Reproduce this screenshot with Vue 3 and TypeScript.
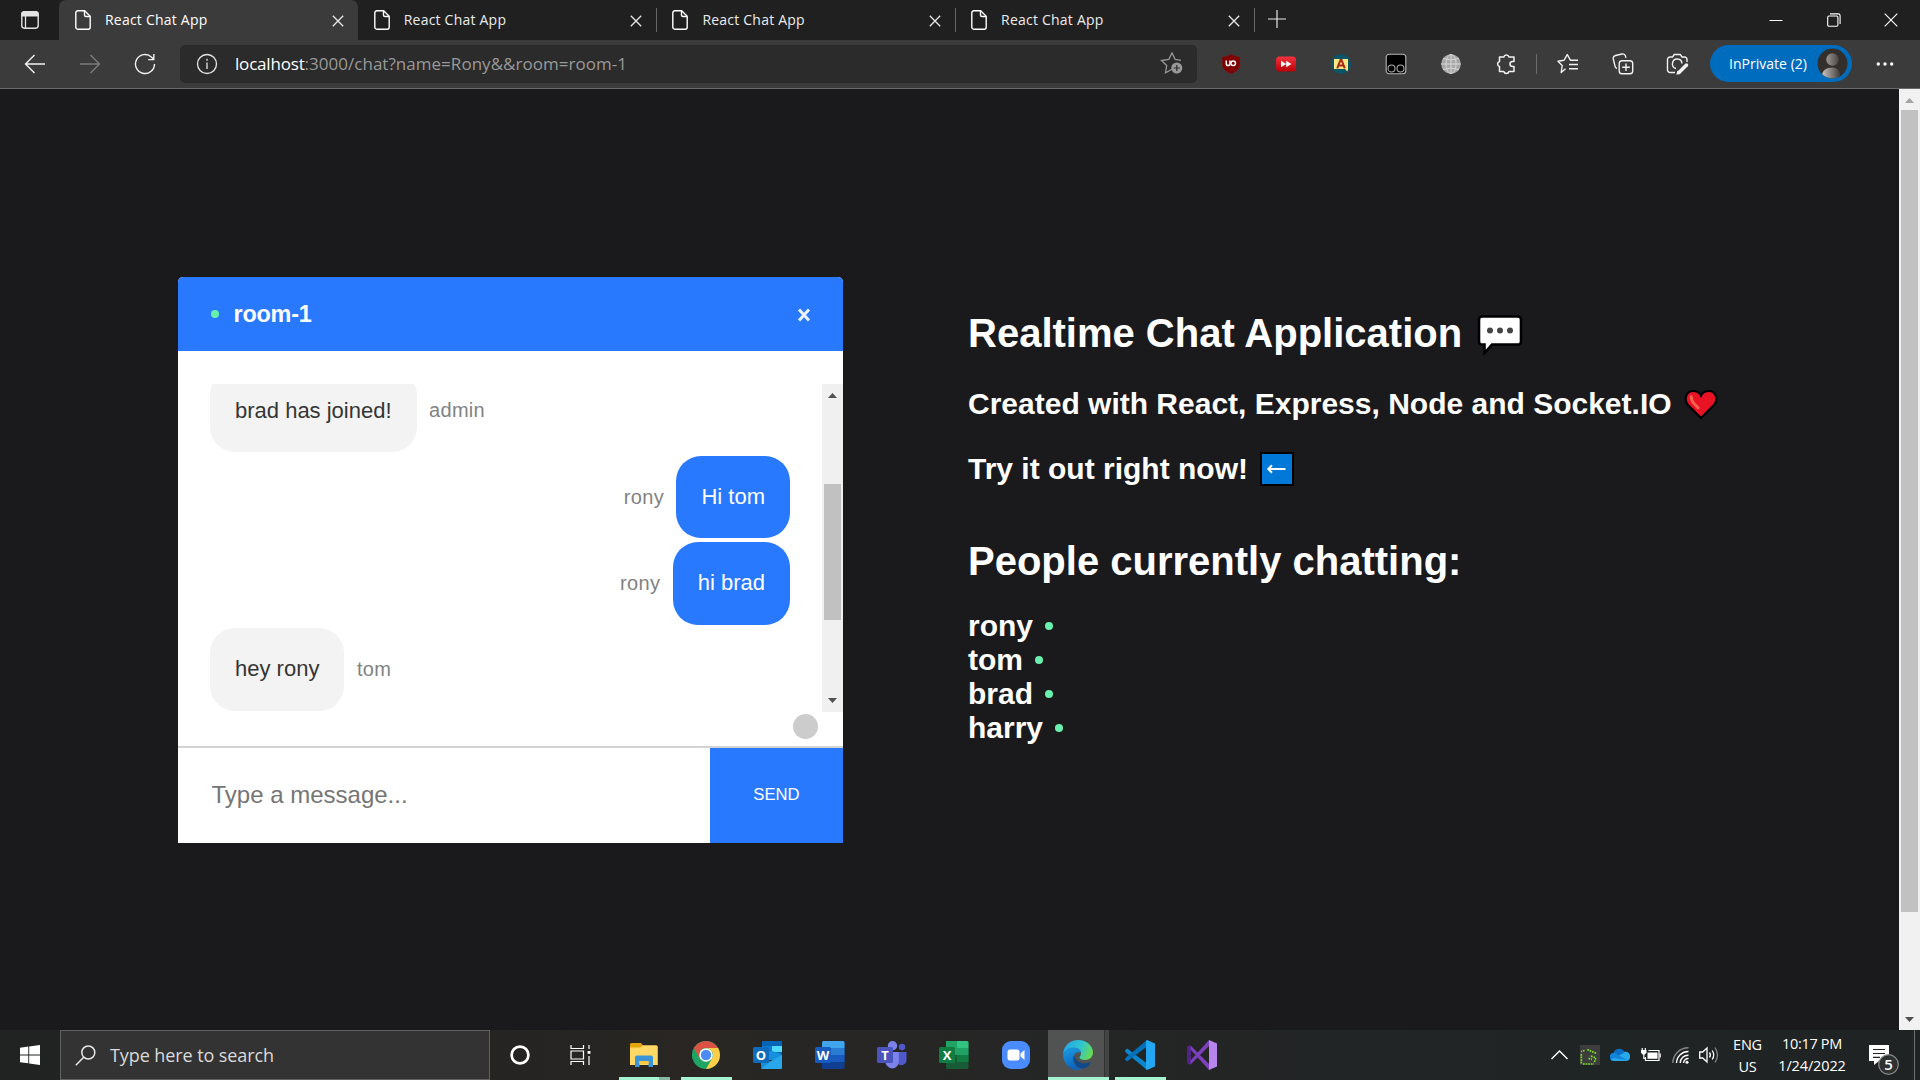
<script setup lang="ts">
import type { Directive } from 'vue'

interface Tab { id: number; title: string; active: boolean }
interface Message { id: number; user: string; text: string; mine: boolean }

const tabs: Tab[] = [1, 2, 3, 4].map((id) => ({ id, title: 'React Chat App', active: id === 1 }))

const messages: Message[] = [
  { id: 1, user: 'admin', text: 'brad has joined!', mine: false },
  { id: 2, user: 'rony', text: 'Hi tom', mine: true },
  { id: 3, user: 'rony', text: 'hi brad', mine: true },
  { id: 4, user: 'tom', text: 'hey rony', mine: false },
]

const people: string[] = ['rony', 'tom', 'brad', 'harry']

// Tracks a label so that it takes the given width in pixels
const vFit: Directive<HTMLElement, number> = {
  mounted(el, { value }) {
    const count = (el.textContent ?? '').length
    const width = el.getBoundingClientRect().width
    if (count > 0) el.style.letterSpacing = `${(value - width) / count}px`
  },
}
</script>

<template>
  <div class="screen">
    <div class="tabstrip">
      <div class="workspaces">
        <svg width="20" height="20" viewBox="0 0 20 20">
          <rect x="1.8" y="1.8" width="16.4" height="16.4" rx="2.6" fill="none" stroke="#e4e4e4" stroke-width="1.4" />
          <path d="M1.5 6.5V4a2.6 2.6 0 0 1 2.6-2.6h11.8A2.6 2.6 0 0 1 18.5 4v2.5z" fill="#e4e4e4" />
          <path d="M5.5 6v12" stroke="#e4e4e4" stroke-width="1.3" />
        </svg>
      </div>
      <div v-for="tab in tabs" :key="tab.id" class="tab" :class="{ active: tab.active }">
        <svg class="file" width="16" height="20" viewBox="0 0 16 20" fill="none" stroke="#fff" stroke-width="1.4" stroke-linejoin="round">
          <path d="M2.8.8h6.9l5.5 5.4v11a2 2 0 0 1-2 2H2.8a2 2 0 0 1-2-2V2.8a2 2 0 0 1 2-2z" />
          <path d="M9.5 1v4a1.5 1.5 0 0 0 1.5 1.5h4" />
        </svg>
        <span class="tab-title"><span v-fit="102.5" class="fit">{{ tab.title }}</span></span>
        <svg class="tab-close" width="12" height="12" viewBox="0 0 12 12" stroke="#e8e8e8" stroke-width="1.3"><path d="M.8.8l10.400 10.400M11.200.8L.8 11.200" /></svg>
      </div>
      <svg class="plus" width="18" height="18" viewBox="0 0 18 18" stroke="#e8e8e8" stroke-width="1.2"><path d="M9 0v18M0 9h18" /></svg>
      <div class="win-buttons">
        <svg width="14" height="14" viewBox="0 0 14 14" stroke="#fff" stroke-width="1"><path d="M.5 7.500h13" /></svg>
        <svg width="14" height="14" viewBox="0 0 14 14" fill="none" stroke="#fff" stroke-width="1.1"><rect x=".7" y="3" width="10.2" height="10.2" rx="1.2" /><path d="M3 .9h8.300a1.800 1.800 0 0 1 1.800 1.800V11" /></svg>
        <svg width="14" height="14" viewBox="0 0 14 14" stroke="#fff" stroke-width="1.1"><path d="M.7.7l12.600 12.600M13.300.7L.7 13.300" /></svg>
      </div>
    </div>

    <div class="toolbar">
      <div class="nav">
        <svg width="22" height="22" viewBox="0 0 22 22" fill="none" stroke="#f2f2f2" stroke-width="1.4"><path d="M21 11H1.500M10.500 2L1.500 11l9 9" /></svg>
        <svg width="22" height="22" viewBox="0 0 22 22" fill="none" stroke="#7b7b7b" stroke-width="1.4"><path d="M1 11h19.500M11.500 2l9 9-9 9" /></svg>
        <svg width="22" height="22" viewBox="0 0 22 22" fill="none" stroke="#f2f2f2" stroke-width="1.4"><path d="M20.500 11A9.500 9.500 0 1 1 17.600 4.200L19.600 6.200M19.800 1v5.600h-5.600" /></svg>
      </div>
      <div class="address">
        <svg width="22" height="22" viewBox="0 0 22 22" fill="none" stroke="#e6e6e6" stroke-width="1.3"><circle cx="11" cy="11" r="9.500" /><path d="M11 9.500v6.500M11 5.800v1.900" /></svg>
        <span class="url"><span v-fit="69.5" class="host fit">localhost</span><span v-fit="322.5" class="fit">:3000/chat?name=Rony&amp;&amp;room=room-1</span></span>
        <svg class="star" width="24" height="23" viewBox="0 0 24 23">
          <path d="M12 17.200L5.500 20.700 6.700 13.500 1.500 8.500 8.700 7.500 12 1l3.200 6.500 5.800.800" fill="none" stroke="#999" stroke-width="1.300" />
          <circle cx="16.800" cy="16" r="5.500" fill="#999" /><path d="M16.800 13v6M13.800 16h6" stroke="#2b2b2b" stroke-width="1.200" />
        </svg>
      </div>
      <div class="extensions">
        <svg width="22" height="22" viewBox="0 0 22 22">
          <path d="M11 1C8 3 5 3.600 2 3.700V11c0 5 4 8 9 10 5-2 9-5 9-10V3.700C17 3.600 14 3 11 1z" fill="#800000" stroke="#553030" stroke-width=".7" />
          <path d="M6.300 7.500v3.300a1.800 1.800 0 0 0 3.600 0V7.500" fill="none" stroke="#fff" stroke-width="1.500" /><circle cx="13.200" cy="10.200" r="2.300" fill="none" stroke="#fff" stroke-width="1.500" />
        </svg>
        <svg width="22" height="22" viewBox="0 0 22 22">
          <defs><linearGradient id="ff" x2="0" y2="1"><stop stop-color="#f5323e" /><stop offset="1" stop-color="#b80008" /></linearGradient></defs>
          <rect x="1" y="3.500" width="20" height="15" rx="3.600" fill="url(#ff)" /><path d="M6 7.800l5.200 3.200L6 14.200zM11.200 7.800l5.200 3.200-5.200 3.200z" fill="#fff" />
        </svg>
        <svg width="22" height="22" viewBox="0 0 22 22">
          <circle cx="11" cy="11" r="10" fill="#0b5568" /><path d="M4 6h14v10l-.5 2.500L15 16H4z" fill="#ffe783" />
          <path d="M7.200 15.300L10.500 7h1l3.300 8.300M8.300 12.600h5.300" fill="none" stroke="#a52a16" stroke-width="2" />
        </svg>
        <svg width="22" height="22" viewBox="0 0 22 22">
          <rect x="1.200" y="1.200" width="19.600" height="19.600" rx="3" fill="#000" stroke="#b5b5b5" stroke-width="1.100" />
          <circle cx="6.500" cy="15.500" r="3.500" fill="none" stroke="#aaa" stroke-width="1.100" /><circle cx="15.500" cy="15.500" r="3.500" fill="none" stroke="#aaa" stroke-width="1.100" />
        </svg>
        <svg width="22" height="22" viewBox="0 0 22 22">
          <circle cx="11" cy="11" r="9.800" fill="#a8a8a8" />
          <g fill="none" stroke="#d9d9d9" stroke-width=".9"><ellipse cx="11" cy="11" rx="5" ry="9.600" /><path d="M11 1v20M1 11h20M3 5.500q8 3 16 0M3 16.500q8-3 16 0" /></g>
        </svg>
        <svg width="22" height="22" viewBox="0 0 22 22" fill="none" stroke="#f2f2f2" stroke-width="1.500" stroke-linejoin="round">
          <path d="M4.500 4h4.300a2.700 2.700 0 0 1 5.200 0h5v4.500h-1.500a2.500 2.500 0 0 0 0 5H19V18.500h-5a2.700 2.700 0 0 1-5.200 0H4.500v-5a2.600 2.600 0 0 1 0-5z" />
        </svg>
      </div>
      <i class="tool-divider"></i>
      <div class="tools">
        <svg width="22" height="22" viewBox="0 0 22 22" fill="none" stroke="#f2f2f2" stroke-width="1.400" stroke-linejoin="round">
          <path d="M8.500 15.800L4.200 19.500l1-7L1 8.300l6-1L10.300 1.500l3.200 5.800h7.500M12 11.500h9M12 15.700h9" />
        </svg>
        <svg width="22" height="22" viewBox="0 0 22 22" fill="none" stroke="#f2f2f2" stroke-width="1.400">
          <path d="M5 15.500A3 3 0 0 1 3 13L1.300 6a3 3 0 0 1 2.200-3.500L10 1a3 3 0 0 1 3.500 2.200l.4 1.600" /><rect x="7.200" y="7.700" width="13.500" height="13" rx="2.800" /><path d="M14 10.500v7.500M10.200 14.200h7.600" />
        </svg>
        <svg width="23" height="22" viewBox="0 0 23 22" fill="none" stroke="#f2f2f2" stroke-width="1.400">
          <path d="M9 19.500H4a2.500 2.500 0 0 1-2.500-2.500V6.500A2.500 2.500 0 0 1 4 4h2.500L8.300 1.500h6L16 4h2.500A2.500 2.500 0 0 1 21 6.500V9M10 15.500a4.800 4.800 0 1 1 6-5" /><path d="M20.500 12l-7.500 7.500" stroke-width="3.500" stroke-linecap="round" /><path d="M10.300 21.800l1-4 3 3z" fill="#f2f2f2" stroke="none" />
        </svg>
      </div>
      <div class="inprivate">
        <span v-fit="78" class="fit">InPrivate (2)</span>
        <svg width="31" height="31" viewBox="0 0 31 31">
          <defs>
            <linearGradient id="face"><stop stop-color="#9c9793" /><stop offset="1" stop-color="#4a4644" /></linearGradient>
            <linearGradient id="bust"><stop stop-color="#c8c3bf" /><stop offset="1" stop-color="#3e3a38" /></linearGradient>
            <clipPath id="disc"><circle cx="15.500" cy="15.500" r="15" /></clipPath>
          </defs>
          <circle cx="15.500" cy="15.500" r="15" fill="#322f2d" />
          <circle cx="15.500" cy="11.500" r="6.200" fill="url(#face)" />
          <path d="M5 28c0-5.500 4-8.500 10.500-8.500 5 0 8 3 8 11.500H5z" fill="url(#bust)" clip-path="url(#disc)" />
        </svg>
      </div>
      <svg class="more" width="18" height="6" viewBox="0 0 18 6" fill="#fff"><circle cx="2.300" cy="3" r="1.700" /><circle cx="9" cy="3" r="1.700" /><circle cx="15.700" cy="3" r="1.700" /></svg>
    </div>

    <div class="page">
      <section class="chat">
        <header class="chat-head">
          <i class="online"></i>
          <h3>room-1</h3>
          <svg width="14" height="14" viewBox="0 0 14 14" stroke="#e9f1ff" stroke-width="3"><path d="M2 1.500l10 11M12 1.500l-10 11" /></svg>
        </header>
        <div class="messages">
          <div class="message-list">
            <div v-for="m in messages" :key="m.id" class="message" :class="{ mine: m.mine }">
              <p class="bubble">{{ m.text }}</p>
              <p class="sender">{{ m.user }}</p>
            </div>
          </div>
          <div class="scrollbar inner">
            <svg class="up" width="9" height="5" viewBox="0 0 9 5"><path d="M0 5L4.500 0 9 5z" fill="#505050" /></svg>
            <i class="thumb"></i>
            <svg class="down" width="9" height="5" viewBox="0 0 9 5"><path d="M0 0l4.500 5L9 0z" fill="#505050" /></svg>
          </div>
        </div>
        <div class="typing"><i></i></div>
        <form class="compose" @submit.prevent>
          <input type="text" placeholder="Type a message...">
          <button type="submit">SEND</button>
        </form>
      </section>

      <section class="info">
        <h1>Realtime Chat Application
          <svg class="speech" width="46" height="40" viewBox="0 0 46 40">
            <path d="M5 1.500h36a3 3 0 0 1 3 3v22a3 3 0 0 1-3 3H15L7.500 38V29.500H5a3 3 0 0 1-3-3v-22a3 3 0 0 1 3-3z" fill="#fff" stroke="#000" stroke-width="2.600" />
            <circle cx="13" cy="15.500" r="3" fill="#444" /><circle cx="23" cy="15.500" r="3" fill="#444" /><circle cx="33" cy="15.500" r="3" fill="#444" />
          </svg>
        </h1>
        <h2>Created with React, Express, Node and Socket.IO
          <svg class="heart" width="34" height="31" viewBox="0 0 34 31">
            <path d="M17 29L3.500 15.500C-.5 10 2.500 2 9 2c3.500 0 6.500 1.500 8 4.500C18.500 3.500 21.500 2 25 2c6.500 0 9.500 8 5.500 13.500z" fill="#e81224" stroke="#000" stroke-width="2.200" />
            <path d="M7.200 7.500c0 5 3 7.500 7 11.300" fill="none" stroke="#f4644f" stroke-width="3" stroke-linecap="round" />
          </svg>
        </h2>
        <h2 class="try">Try it out right now!
          <svg class="arrow" width="34" height="34" viewBox="0 0 34 34">
            <rect x="1" y="1" width="32" height="32" fill="#0078d7" stroke="#000" stroke-width="2" />
            <path d="M25.500 17H9M12 13.300L8.300 17l3.700 3.700" fill="none" stroke="#fff" stroke-width="2" />
          </svg>
        </h2>
        <h1 class="people-title">People currently chatting:</h1>
        <ul class="people">
          <li v-for="p in people" :key="p">{{ p }}<i class="online"></i></li>
        </ul>
      </section>

      <div class="scrollbar outer">
        <svg class="up" width="9" height="5" viewBox="0 0 9 5"><path d="M0 5L4.500 0 9 5z" fill="#a3a3a3" /></svg>
        <i class="thumb"></i>
        <svg class="down" width="9" height="5" viewBox="0 0 9 5"><path d="M0 0l4.500 5L9 0z" fill="#505050" /></svg>
      </div>
    </div>

    <div class="taskbar">
      <div class="start">
        <svg width="20" height="20" viewBox="0 0 20 20" fill="#fff"><path d="M0 2.800l8.300-1.200v7.900H0zM9.200 1.500L20 0v9.500H9.200zM0 10.400h8.300v7.900L0 17.200zM9.200 10.400H20V20L9.200 18.500z" /></svg>
      </div>
      <div class="search">
        <svg width="21" height="21" viewBox="0 0 21 21" fill="none" stroke="#e8e8e8" stroke-width="1.500"><circle cx="13.300" cy="7.500" r="6.500" /><path d="M8.700 12.200L.8 20.200" /></svg>
        <span v-fit="164" class="fit">Type here to search</span>
      </div>
      <div class="sys">
        <svg width="20" height="20" viewBox="0 0 20 20"><circle cx="10" cy="10" r="8.400" fill="none" stroke="#fff" stroke-width="2.700" /></svg>
      </div>
      <div class="sys">
        <svg width="21" height="20" viewBox="0 0 21 20" fill="none" stroke="#fff" stroke-width="1.200"><path d="M1 0v3.500h12.500V0M1 20v-3.500h12.500V20M1 6h12.500v8H1zM19 0v4M19 11v9" /><rect x="17.600" y="6" width="2.800" height="2.800" fill="#fff" stroke="none" /></svg>
      </div>

      <div class="apps">
        <div class="app">
          <svg width="28" height="24" viewBox="0 0 28 24"><path d="M0 1.500A1.500 1.500 0 0 1 1.500 0H11l2 2.500V6H0z" fill="#e5a50c" /><path d="M0 4.500h10.500L13 2.200h13a1.800 1.800 0 0 1 1.800 1.800v18H0z" fill="#ffd866" /><path d="M5 24V14.500a2 2 0 0 1 2-2h14a2 2 0 0 1 2 2V24h-4.500v-6h-9v6z" fill="#3a94d8" /><path d="M9.500 18h9v3h-9z" fill="#fbc73d" /></svg>
          <i class="line files"></i>
        </div>
        <div class="app">
          <svg width="28" height="28" viewBox="0 0 28 28"><circle cx="14" cy="14" r="14" fill="#1fa463" /><path d="M1.880 7A14 14 0 0 1 26.120 7H14a7 7 0 0 0-6.100 10.500z" fill="#dd5144" /><path d="M26.120 7A14 14 0 0 1 14 28l6.060-10.500A7 7 0 0 0 14 7z" fill="#ffcd46" /><circle cx="14" cy="14" r="6.800" fill="#fff" /><circle cx="14" cy="14" r="5.200" fill="#4c8bf5" /></svg>
          <i class="line wide"></i>
        </div>
        <div class="app">
          <svg width="30" height="28" viewBox="0 0 30 28"><rect x="9" width="20" height="15" rx="1" fill="#0364b8" /><path d="M9 5h10v5H9z" fill="#0f78d4" /><path d="M19 5h10v6H19z" fill="#50d9ff" /><path d="M9 10h10l9 3v6H9z" fill="#1490df" /><path d="M7 14l11 7 11-7v12.500a1.500 1.500 0 0 1-1.500 1.500h-19z" fill="#1a8fdd" /><path d="M18 20l11-6v12.500a1.500 1.500 0 0 1-1.500 1.500H8z" fill="#28a8ea" /><rect y="6" width="16" height="16" rx="1.500" fill="#0f6cbd" /><text x="8" y="18.500" fill="#fff">O</text></svg>
        </div>
        <div class="app">
          <svg width="30" height="28" viewBox="0 0 30 28"><rect x="7" width="22.500" height="28" rx="1.500" fill="#103f91" /><path d="M7 14h22.500v7H7z" fill="#185abd" /><path d="M7 7h22.500v7H7z" fill="#2b7cd3" /><path d="M7 7V1.500A1.500 1.500 0 0 1 8.500 0H28a1.500 1.500 0 0 1 1.500 1.500V7z" fill="#41a5ee" /><rect y="6" width="16" height="16" rx="1.500" fill="#185abd" /><text x="8" y="18.500" fill="#fff">W</text></svg>
        </div>
        <div class="app">
          <svg width="30" height="28" viewBox="0 0 30 28"><circle cx="25" cy="6" r="3.200" fill="#5059c9" /><path d="M19 11h10.500v8a5.200 5.200 0 0 1-9 3.500z" fill="#5059c9" /><circle cx="15.500" cy="4.700" r="4.700" fill="#7b83eb" /><path d="M8.500 11h13.300v9A7 7 0 0 1 15 27.500 7 7 0 0 1 8.500 20z" fill="#7b83eb" /><rect y="6" width="16" height="16" rx="1.500" fill="#4b53bc" /><text x="8" y="18.500" fill="#fff">T</text></svg>
        </div>
        <div class="app">
          <svg width="30" height="28" viewBox="0 0 30 28"><rect x="7" width="22.500" height="28" rx="1.500" fill="#185c37" /><path d="M7 14h11v7H7z" fill="#185c37" /><path d="M18 14h11.500v7H18zM7 7h11v7H7z" fill="#107c41" /><path d="M7 0h11v14H7z" fill="#21a366" /><path d="M18 0h10a1.500 1.500 0 0 1 1.500 1.500V7H18z" fill="#33c481" /><path d="M18 7h11.500v7H18z" fill="#21a366" /><rect y="6" width="16" height="16" rx="1.500" fill="#107c41" /><text x="8" y="18.500" fill="#fff">X</text></svg>
        </div>
        <div class="app">
          <svg width="28" height="28" viewBox="0 0 28 28"><rect width="28" height="28" rx="9" fill="#4a8cff" /><rect x="5.500" y="8.500" width="12" height="11" rx="2.500" fill="#fff" /><path d="M18.500 12.500L22.500 9v10l-4-3.500z" fill="#fff" /></svg>
        </div>
        <div class="app current">
          <svg width="30" height="30" viewBox="0 0 30 30">
            <defs>
              <linearGradient id="e1" x1="0" y1=".3" x2="1" y2=".6"><stop stop-color="#27a6e6" /><stop offset=".55" stop-color="#2fc6cf" /><stop offset="1" stop-color="#6bdc4e" /></linearGradient>
              <linearGradient id="e2" x2=".3" y2="1"><stop stop-color="#1b9de2" /><stop offset="1" stop-color="#0d65bd" /></linearGradient>
            </defs>
            <path d="M0 14C1 5.500 7 0 15 0c9 0 15 6 15 12.500 0 4.500-3.500 7.500-8 7.500-3.500 0-5.500-1.300-5.500-2.500s1.500-1.500 1.500-4.500c0-3-3-5-7-5-5 0-9 3-11 6z" fill="url(#e1)" />
            <path d="M0 14c1.500-4 5-6.500 10-6.500 4.500 0 8 2.500 8 5.500-1-1.500-5-1-6.500 1.500-3.500 6 1 13.500 7.500 14.800-1.300.5-3 .7-4 .7C6.500 30 0 23 0 14z" fill="url(#e2)" />
            <path d="M11.300 14.500c-3 7 2 14 9 14.200 3.500-1 6.500-3.800 8-6.700-8.500 3.500-17-.5-17-7.500z" fill="#114a8b" />
          </svg>
          <i class="line full"></i>
        </div>
        <div class="app">
          <svg width="30" height="30" viewBox="0 0 30 30"><path d="M0 10.500l2.200-2L22 23.500V30L.3 12z" fill="#0a85cf" /><path d="M0 19.500l2.200 2L22 6.500V0L.3 18z" fill="#0070b8" /><path d="M22 0l8 3.500v23L22 30l-1-1V1z" fill="#23a7f2" /></svg>
          <i class="line wide"></i>
        </div>
        <div class="app">
          <svg width="30" height="30" viewBox="0 0 30 30"><path d="M0 7l3.500-1.500L22 24v6L3.500 9.500 3.500 20.500 22 0v6L3.500 24.500 0 23z" fill="#7c3fbd" /><path d="M0 7l3.500-1.500v19L0 23z" fill="#52218a" /><path d="M22 0l8 3.500v23L22 30z" fill="#b685ee" /></svg>
        </div>
      </div>

      <div class="tray">
        <svg class="chevron" width="17" height="10" viewBox="0 0 17 10" fill="none" stroke="#fff" stroke-width="1.400"><path d="M.5 9l8-8 8 8" /></svg>
        <svg class="green" width="20" height="20" viewBox="0 0 20 20"><rect width="20" height="20" fill="#3d3d3d" /><path d="M16 8.300L6.500 4.200M4.500 5.500L1 6.500M1.300 9v10M3 19h11M14.500 17l1.300-4.300L10 10.800M8.500 13.500l3.500.8" fill="none" stroke="#7be31c" stroke-width="1.700" stroke-dasharray="1.700 .9" /></svg>
        <svg class="cloud" width="20" height="14" viewBox="0 0 20 14"><path d="M4 13A4 4 0 0 1 3.500 5 6 6 0 0 1 14.500 4L17 8z" fill="#0a6fc8" /><path d="M12 6l3-2.500A4.800 4.800 0 0 1 20 9c0 2.500-1.500 4-4 4H4a4 4 0 0 1-3.500-2z" fill="#28a8ea" /><path d="M0 9.500A4 4 0 0 1 5 5.100L17 12z" fill="#1384d8" /></svg>
        <svg class="battery" width="20" height="14" viewBox="0 0 20 14" fill="none" stroke="#fff" stroke-width="1.200"><path d="M7.500 2.500H18v10H4.500V9" /><path d="M6.500 4.500h10v6.300H6.500z" fill="#fff" stroke="none" /><path d="M19.200 5.500v4M1.200 0v2M4.300 0v2M2.800 6v4.500h1.700" /><path d="M0 2h5.500v2.500L4 6.500H1.500L0 4.500z" fill="#fff" stroke="none" /></svg>
        <svg class="wifi" width="17" height="17" viewBox="0 0 17 17" fill="none" stroke-width="1.400"><path d="M.8 16A15.500 15.500 0 0 1 16.500.8" stroke="#888" /><path d="M4.500 16A11.800 11.800 0 0 1 16.500 4.500M8.200 16a8 8 0 0 1 8.300-7.800" stroke="#fff" /><path d="M11.500 16a4.700 4.700 0 0 1 5-4.500" stroke="#fff" /><circle cx="15" cy="15.200" r="1.500" fill="#fff" /></svg>
        <svg class="volume" width="20" height="18" viewBox="0 0 20 18" fill="none" stroke="#fff" stroke-width="1.300"><path d="M.7 6h3L8 2v14l-4.300-4h-3z" /><path d="M10.500 6.500q1.800 2.500 0 5M13.200 4.500q3 4.500 0 9" /><path d="M16 1.500q5 7.500 0 15" stroke="#888" /></svg>
        <div class="lang"><span v-fit="29" class="fit">ENG</span><span v-fit="18" class="fit">US</span></div>
        <div class="clock"><span v-fit="60" class="fit">10:17 PM</span><span v-fit="67.5" class="fit">1/24/2022</span></div>
        <svg class="notify" width="32" height="32" viewBox="0 0 32 32">
          <path d="M0 0h20v16H10l-5 4v-4H0z" fill="#fff" /><path d="M4 4.500h12M4 8.500h12M4 12.300h7" stroke="#222" stroke-width="1.200" />
          <circle cx="19.500" cy="19.500" r="9.800" fill="#303232" stroke="#8b8b8b" stroke-width="1.200" /><text x="19.500" y="25" fill="#fff">5</text>
        </svg>
        <i class="desktop"></i>
      </div>
    </div>
  </div>
</template>

<style>
body { margin: 0; background: #1a1a1d; }
</style>

<style scoped>
* { box-sizing: border-box; }
svg { display: block; flex: none; }
i { flex: none; }
.fit { display: inline-block; white-space: nowrap; }
.screen { width: 1920px; height: 1080px; overflow: hidden; display: flex; flex-direction: column; background: #1a1a1d; font-family: "Open Sans", "Noto Sans", sans-serif; }

.tabstrip { height: 40px; display: flex; background: #202020; color: #ececec; }
.workspaces { width: 59px; padding: 10px 0 0 20px; background: #1e1e1e; }
.tab { width: 298.700px; height: 40px; display: flex; padding: 10px 14px 0 16px; position: relative; font-size: 14px; line-height: 20px; }
.tab.active { background: #3b3b3b; border-radius: 7px 7px 0 0; color: #fff; }
.tab:not(.active)::after { content: ""; position: absolute; right: -1px; top: 8px; height: 24px; width: 1px; background: #666; }
.tab-title { margin-left: 14px; flex: 1; }
.tab-close { margin-top: 5px; }
.plus { margin: 10px 0 0 14px; }
.win-buttons { margin-left: auto; display: flex; gap: 43.500px; padding: 12.500px 22px 0 0; }

.toolbar { height: 49px; display: flex; align-items: center; background: #3b3b3b; border-bottom: 1px solid #6a6a6a; }
.toolbar > * { margin-bottom: 1px; }
.nav { display: flex; gap: 33px; width: 180px; padding-left: 24px; flex: none; }
.address { width: 1017px; height: 38px; background: #2b2b2b; border-radius: 5px; display: flex; align-items: center; padding: 0 13px 0 16px; flex: none; }
.url { margin-left: 17px; flex: 1; display: flex; font-size: 17px; line-height: 24px; color: #999; }
.host { color: #fff; }
.extensions { display: flex; gap: 33px; margin-left: 23px; }
.tool-divider { width: 1px; height: 20px; background: #6c6c6c; margin-left: 19px; }
.tools { display: flex; gap: 32.500px; margin-left: 20px; }
.inprivate { width: 142px; height: 37px; border-radius: 19px; background: #006cbe; color: #fff; display: flex; align-items: center; margin-left: 21px; padding: 0 4px 0 19px; justify-content: space-between; font-size: 14px; flex: none; }
.more { margin-left: 24px; }

.page { height: 941px; display: flex; flex: none; background: #1a1a1d; font-family: "Liberation Sans", Arial, sans-serif; }
.chat { width: 665px; height: 566px; margin: 188px 0 0 178px; background: #fff; border-radius: 5px 5px 0 0; overflow: hidden; flex: none; display: flex; flex-direction: column; }
.chat-head { height: 74px; background: #2979ff; color: #fff; display: flex; align-items: center; padding: 0 32.500px 0 33px; }
.chat-head h3 { margin: 0 0 0 14.500px; flex: 1; font-size: 23.400px; line-height: 28px; letter-spacing: -.200px; }
.chat-head svg { margin-top: 1px; }
.online { display: inline-block; width: 8px; height: 8px; border-radius: 50%; background: #69f0ae; }
.messages { height: 328px; margin-top: 33px; display: flex; }
.message-list { flex: 1; height: 328px; overflow: hidden; padding: 0 32px 1.250px; display: flex; flex-direction: column; justify-content: flex-end; gap: 3.750px; }
.message { display: flex; align-items: center; flex: none; gap: 12.500px; }
.message.mine { flex-direction: row-reverse; }
.message p { margin: 0; }
.bubble { height: 82.500px; border-radius: 25px; padding: 0 25px; background: #f3f3f3; color: #353535; font-size: 22px; line-height: 82px; }
.mine .bubble { background: #2979ff; color: #fff; }
.sender { font-size: 20px; line-height: 24px; color: #828282; letter-spacing: .300px; padding-bottom: 1px; }
.scrollbar { width: 21px; background: #f0f0f0; display: flex; flex-direction: column; align-items: center; flex: none; }
.scrollbar .down { margin-top: auto; }
.thumb { display: block; width: 17px; background: #c1c1c1; }
.inner { height: 328px; padding: 9px 0; }
.inner .thumb { height: 136px; margin-top: 86px; }
.typing { height: 34px; padding: 2px 25px 0 0; display: flex; justify-content: flex-end; }
.typing i { width: 25px; height: 25px; border-radius: 50%; background: #ccc; }
.compose { height: 97px; border-top: 2px solid #d3d3d3; display: flex; }
.compose input { width: 532px; border: 0; padding: 0 33px 2px 33.500px; font: 24px "Liberation Sans", Arial, sans-serif; background: #fff; outline: none; border-radius: 0; }
.compose input::placeholder { color: #757575; opacity: 1; }
.compose button { flex: 1; border: 0; padding: 0 0 2px; background: #2979ff; color: #fff; font: 16.670px "Liberation Sans", Arial, sans-serif; }

.info { margin-left: 125px; padding-top: 221px; color: #fff; flex: 1; white-space: nowrap; }
.info h1 { margin: 0; font-size: 40px; line-height: 46px; height: 46px; display: flex; }
.info h2 { margin: 31px 0 0; font-size: 30px; line-height: 34px; height: 34px; display: flex; }
.info .people-title { margin-top: 52px; }
.speech { margin: 5px 0 0 15px; }
.heart { margin: 2px 0 0 12px; }
.arrow { margin: 0 0 0 12px; }
.people { list-style: none; margin: 25px 0 0; padding: 0; font-size: 30px; font-weight: bold; line-height: 34px; }
.people li { display: flex; align-items: center; }
.people .online { margin: 0 0 1px 11.500px; }
.outer { height: 941px; padding: 9px 0 8px; background: #f1f1f1; }
.outer .thumb { height: 802px; margin-top: 7px; }

.taskbar { height: 50px; display: flex; flex: none; color: #fff; background: linear-gradient(90deg, #202322 0, #252422 500px, #292623 700px, #252625 1000px, #1f2424 1600px, #1f2323 100%); }
.start { width: 60px; padding: 15px 0 0 20px; }
.search { width: 430px; height: 50px; background: #333; border: 1px solid #606060; display: flex; align-items: center; padding-left: 14px; font-size: 18px; color: #dadada; }
.search span { margin-left: 14px; }
.sys { width: 60px; display: flex; align-items: center; justify-content: center; }
.sys + .sys { width: 61px; }
.apps { display: flex; margin-left: 2px; }
.app { width: 62px; height: 50px; display: flex; align-items: center; justify-content: center; position: relative; }
.app text { font: bold 13px "Open Sans", sans-serif; text-anchor: middle; }
.app.current { background: linear-gradient(90deg, transparent 1px, #515352 1px, #515352 57px, #303332 57px, #303332 58px, #414443 58px); }
.line { position: absolute; bottom: 0; height: 3px; background: #a5f3d1; }
.line.wide { left: 6px; width: 51px; }
.line.full { left: 1px; width: 61px; }
.line.files { left: 6px; width: 51px; background: linear-gradient(90deg, #a5f3d1 40px, #86b8a3 40px); }
.tray { margin-left: auto; display: flex; align-items: center; height: 50px; }
.green { margin-left: 12px; }
.cloud { margin-left: 10px; }
.battery { margin-left: 11px; }
.wifi { margin-left: 11px; }
.volume { margin-left: 10px; }
.lang, .clock { display: flex; flex-direction: column; align-items: center; font-size: 14.500px; line-height: 22px; }
.lang { width: 31px; margin-left: 13px; padding-top: 2px; }
.clock { width: 70px; margin-left: 14px; }
.notify { margin: 12px 0 0 22px; }
.notify text { font: 600 15px "Open Sans", sans-serif; text-anchor: middle; }
.desktop { width: 1px; height: 50px; background: #6a6e6e; margin: 0 5px 0 13px; }
</style>
